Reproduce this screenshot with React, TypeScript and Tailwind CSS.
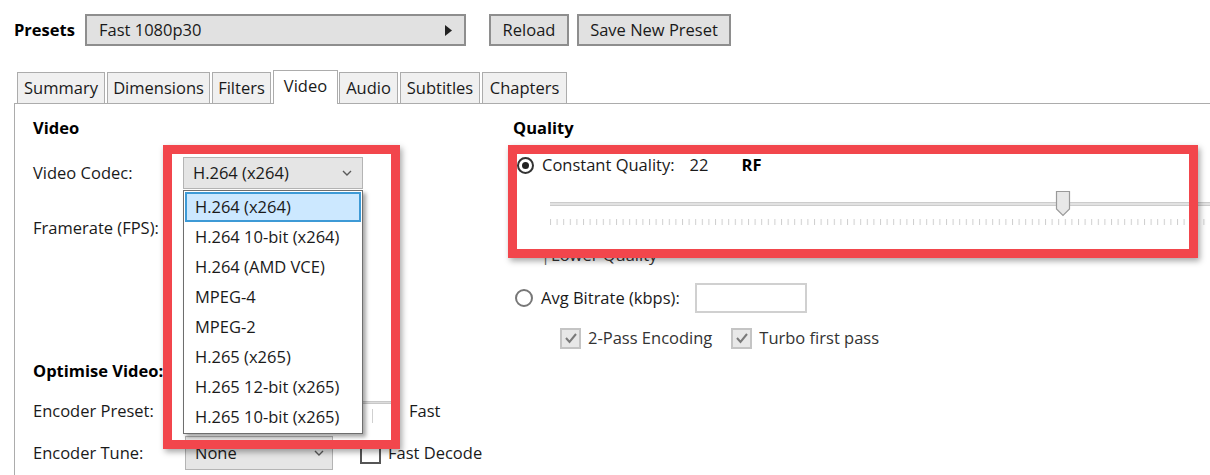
import React from "react";

const Chevron = () => (
  <svg width="10" height="6" viewBox="0 0 10 6" className="shrink-0">
    <polyline points="1,1 5,5 9,1" fill="none" stroke="#5a5a5a" strokeWidth="1.4" />
  </svg>
);

const Check = () => (
  <svg width="14" height="12" viewBox="0 0 14 12">
    <polyline points="2,6 5.5,10 12,2" fill="none" stroke="#7a7a7a" strokeWidth="2" />
  </svg>
);

const Ticks = ({ width }: { width: number }) => (
  <svg width={width} height="8" className="block">
    <defs>
      <pattern id="tk" x="0" y="0" width="6.6" height="8" patternUnits="userSpaceOnUse">
        <rect x="0" y="1" width="1" height="6" fill="#cfcfcf" />
      </pattern>
    </defs>
    <rect x="0" y="0" width={width} height="8" fill="url(#tk)" />
  </svg>
);

const tabs = [
  { n: "Summary", w: 88 },
  { n: "Dimensions", w: 103 },
  { n: "Filters", w: 59 },
  { n: "Video", w: 65, sel: true },
  { n: "Audio", w: 59 },
  { n: "Subtitles", w: 80 },
  { n: "Chapters", w: 85 },
];

const codecs = [
  "H.264 (x264)",
  "H.264 10-bit (x264)",
  "H.264 (AMD VCE)",
  "MPEG-4",
  "MPEG-2",
  "H.265 (x265)",
  "H.265 12-bit (x265)",
  "H.265 10-bit (x265)",
];

export default function App() {
  return (
    <div className="relative w-[1210px] h-[475px] overflow-hidden bg-white text-[16.5px] leading-[24px] text-[#1a1a1a] [font-family:'Open_Sans','Noto_Sans',sans-serif]">
      {/* Top row */}
      <div className="flex items-center h-[32px] mt-[14px] ml-[14px]">
        <span className="font-bold w-[71px] text-black">Presets</span>
        <div className="flex items-center justify-between w-[381px] h-[32px] border-2 border-[#8e8e8e] bg-[#e1e1e1] pl-[12px] pr-[12px]">
          <span>Fast 1080p30</span>
          <svg width="7" height="11" viewBox="0 0 7 11">
            <polygon points="0,0 7,5.5 0,11" fill="#222" />
          </svg>
        </div>
        <div className="ml-[23px] flex items-center justify-center w-[80px] h-[32px] border-2 border-[#8e8e8e] bg-[#e1e1e1]">Reload</div>
        <div className="ml-[8px] flex items-center justify-center w-[154px] h-[32px] border-2 border-[#8e8e8e] bg-[#e1e1e1]">Save New Preset</div>
      </div>

      {/* Tabs */}
      <div className="flex items-end h-[33px] mt-[25px] ml-[14px] border-b border-[#acacac] relative">
        <div className="w-[3px]" />
        {tabs.map((t) => (
          <div
            key={t.n}
            style={{ width: t.w }}
            className={
              t.sel
                ? "h-[34px] -mb-px mr-[1px] flex items-start pt-[3px] justify-center bg-white border border-b-0 border-[#acacac] relative z-10"
                : "h-[31px] mr-[2px] flex items-center justify-center bg-[#f0f0f0] border border-b-0 border-[#acacac]"
            }
          >
            {t.n}
          </div>
        ))}
      </div>

      {/* Panel */}
      <div className="ml-[14px] border-l border-[#acacac] h-[372px] flex pl-[18px]">
        {/* Left column */}
        <div className="w-[479px] shrink-0 flex flex-col pt-[12px]">
          <div className="font-bold h-[24px] leading-[24px] text-black">Video</div>
          <div className="flex items-center h-[32px] mt-[17px]">
            <span className="w-[150px]">Video Codec:</span>
            <div className="flex items-center justify-between w-[180px] h-[32px] border border-[#b4b4b4] bg-[#e5e5e5] pl-[9px] pr-[10px]">
              <span>H.264 (x264)</span>
              <Chevron />
            </div>
          </div>
          <div className="flex items-center h-[32px] mt-[23px]">
            <span className="w-[150px]">Framerate (FPS):</span>
            <div className="w-[180px] h-[32px] border border-[#b4b4b4] bg-[#e5e5e5]" />
          </div>
          <div className="font-bold h-[24px] mt-[115px] text-black">Optimise Video:</div>
          <div className="flex items-center h-[32px] mt-[12px]">
            <span className="w-[152px]">Encoder Preset:</span>
            <div className="relative w-[206px] h-[32px]">
              <div className="absolute left-0 right-0 top-[6px] h-[3px] bg-[#dcdcdc] border-y border-[#c8c8c8]" />
              <div className="absolute right-[18px] top-[14px] w-px h-[14px] bg-[#d0d0d0]" />
            </div>
            <span className="ml-[18px]">Fast</span>
          </div>
          <div className="flex items-center h-[34px] mt-[9px]">
            <span className="w-[152px]">Encoder Tune:</span>
            <div className="flex items-center justify-between w-[148px] h-[34px] border border-[#b4b4b4] bg-[#e5e5e5] pl-[9px] pr-[8px]">
              <span>None</span>
              <Chevron />
            </div>
            <div className="ml-[27px] w-[21px] h-[21px] border-2 border-[#555] bg-white" />
            <span className="ml-[7px]">Fast Decode</span>
          </div>
        </div>

        {/* Right column */}
        <div className="flex-1 flex flex-col pt-[12px]">
          <div className="font-bold h-[24px] text-black ml-[1px]">Quality</div>
          <div className="flex items-center h-[24px] mt-[13px]">
            <div className="ml-[5px] w-[17px] h-[17px] rounded-full border-2 border-[#333] flex items-center justify-center">
              <div className="w-[7px] h-[7px] rounded-full bg-[#222]" />
            </div>
            <span className="ml-[8px]">Constant Quality:</span>
            <span className="ml-[15px] w-[52px]">22</span>
            <span className="font-bold text-black">RF</span>
          </div>
          <div className="relative h-[28px] mt-[13px] ml-[38px]">
            <div className="absolute left-0 right-0 top-[12px] h-[4px] bg-[#e2e2e2] border-y border-[#cccccc]" />
            <svg width="16" height="27" viewBox="0 0 16 27" className="absolute left-[505px] top-0">
              <path d="M1.5 1.5 H14.5 V19 L8 25.5 L1.5 19 Z" fill="#e8e8e8" stroke="#9a9a9a" strokeWidth="1.2" />
            </svg>
          </div>
          <div className="ml-[38px] mt-[0px]">
            <Ticks width={660} />
          </div>
          <div className="flex items-center h-[24px] mt-[17px] ml-[29px] text-[#333]">
            <span className="text-[#666]">|</span>
            <span className="ml-[1px]">Lower Quality</span>
          </div>
          <div className="flex items-center h-[30px] mt-[16px]">
            <div className="ml-[3px] w-[18px] h-[18px] rounded-full border-2 border-[#777] bg-white" />
            <span className="ml-[8px]">Avg Bitrate (kbps):</span>
            <div className="ml-[15px] w-[112px] h-[30px] border-2 border-[#d0d0d0] bg-white" />
          </div>
          <div className="flex items-center h-[24px] mt-[13px] ml-[48px]">
            <div className="w-[21px] h-[21px] border-2 border-[#c4c4c4] bg-[#e8e8e8] flex items-center justify-center">
              <Check />
            </div>
            <span className="ml-[7px] text-[#333]">2-Pass Encoding</span>
            <div className="ml-[19px] w-[21px] h-[21px] border-2 border-[#c4c4c4] bg-[#e8e8e8] flex items-center justify-center">
              <Check />
            </div>
            <span className="ml-[7px] text-[#333]">Turbo first pass</span>
          </div>
        </div>
      </div>

      {/* Dropdown list overlay */}
      <div className="absolute left-[183px] top-[190px] w-[180px] h-[244px] border border-[#6e6e6e] bg-white shadow-[3px_3px_4px_rgba(0,0,0,0.35)] pt-[1px] px-[1px]">
        {codecs.map((c, i) => (
          <div
            key={c}
            className={
              i === 0
                ? "h-[30px] flex items-center pl-[8px] bg-[#cce8ff] border-2 border-[#3d9ad6]"
                : "h-[30px] flex items-center pl-[10px]"
            }
          >
            {c}
          </div>
        ))}
      </div>

      {/* Red annotation boxes */}
      <div className="absolute left-[163px] top-[145px] w-[237px] h-[304px] border-[9px] border-[#f2464c] shadow-[2px_3px_6px_rgba(0,0,0,0.35)]" />
      <div className="absolute left-[508px] top-[145px] w-[690px] h-[113px] border-[9px] border-[#f2464c] shadow-[2px_3px_6px_rgba(0,0,0,0.35)]" />
    </div>
  );
}
